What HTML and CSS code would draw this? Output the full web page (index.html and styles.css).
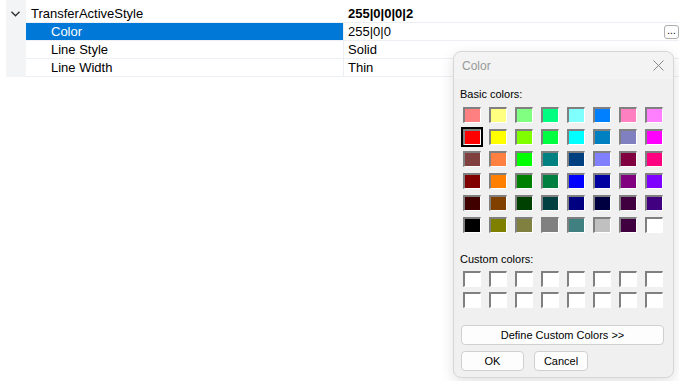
FILE: index.html
```html
<!DOCTYPE html>
<html lang="en">
<head>
    <meta charset="UTF-8">
    <title>Property Grid - Color</title>
    <link rel="stylesheet" href="styles.css">
</head>
<body>
    <div class="grid">
        <div class="gutter">
            <svg class="chevron" width="9" height="6" viewBox="0 0 9 6">
                <path d="M0.5 0.8 L4.5 4.8 L8.5 0.8" fill="none" stroke="#333" stroke-width="1.4"/>
            </svg>
        </div>
        <div class="rows">
            <div class="row category">
                <div class="name">TransferActiveStyle</div>
                <div class="value bold">255|0|0|0|2</div>
            </div>
            <div class="row selected">
                <div class="name sub">Color</div>
                <div class="value">255|0|0<span class="dots">...</span></div>
            </div>
            <div class="row">
                <div class="name sub">Line Style</div>
                <div class="value">Solid</div>
            </div>
            <div class="row">
                <div class="name sub">Line Width</div>
                <div class="value">Thin</div>
            </div>
        </div>
    </div>

    <div class="dialog">
        <div class="titlebar">
            <span class="title">Color</span>
            <svg class="close" width="11" height="11" viewBox="0 0 11 11">
                <path d="M0.5 0.5 L10.5 10.5 M10.5 0.5 L0.5 10.5" stroke="#888" stroke-width="1"/>
            </svg>
        </div>
        <div class="dlg-body">
            <div class="label">Basic colors:</div>
            <div class="swatches" id="basic"></div>
            <div class="label custom-label">Custom colors:</div>
            <div class="swatches custom" id="custom"></div>
            <button class="btn wide">Define Custom Colors &gt;&gt;</button>
            <div class="btn-row">
                <button class="btn ok">OK</button>
                <button class="btn cancel">Cancel</button>
            </div>
        </div>
    </div>

    <script>
        const basic = [
            "#ff8080", "#ffff80", "#80ff80", "#00ff80", "#80ffff", "#0080ff", "#ff80c0", "#ff80ff",
            "#ff0000", "#ffff00", "#80ff00", "#00ff40", "#00ffff", "#0080c0", "#8080c0", "#ff00ff",
            "#804040", "#ff8040", "#00ff00", "#008080", "#004080", "#8080ff", "#800040", "#ff0080",
            "#800000", "#ff8000", "#008000", "#008040", "#0000ff", "#0000a0", "#800080", "#8000ff",
            "#400000", "#804000", "#004000", "#004040", "#000080", "#000040", "#400040", "#400080",
            "#000000", "#808000", "#808040", "#808080", "#408080", "#c0c0c0", "#400040", "#ffffff"
        ];

        let basicBox = document.getElementById("basic");
        basic.forEach(function (c, i) {
            let s = document.createElement("div");
            s.className = "swatch" + (i === 8 ? " current" : "");
            s.style.backgroundColor = c;
            basicBox.appendChild(s);
        });

        let customBox = document.getElementById("custom");
        for (let i = 0; i < 16; i++) {
            let s = document.createElement("div");
            s.className = "swatch";
            customBox.appendChild(s);
        }
    </script>
</body>
</html>
```

FILE: styles.css
```css
body {
    margin: 0;
    background-color: #fff;
    font-family: 'Liberation Sans', Arial, sans-serif;
    color: #000;
}

/* property grid */
.grid {
    display: flex;
    margin-left: 6px;
    height: 77px;
}

.gutter {
    width: 20px;
    background-color: #f3f4f6;
    padding-top: 11px;
    box-sizing: border-box;
}

.chevron {
    display: block;
    margin-left: 5px;
}

.rows {
    flex: 1;
    padding-top: 5px;
}

.row {
    display: flex;
    height: 17px;
    border-bottom: 1px solid #eceff3;
    font-size: 13px;
    line-height: 17px;
}

.name {
    width: 312px;
    padding-left: 5px;
    border-right: 1px solid #eceff3;
}

.name.sub {
    padding-left: 25px;
    width: 292px;
}

.value {
    flex: 1;
    display: flex;
    padding-left: 4px;
}

.bold {
    font-weight: bold;
}

.row.category .name {
    border-right-color: transparent;
}

.row.selected .name {
    background-color: #0078d7;
    color: #fff;
}

.dots {
    margin-left: auto;
    margin-right: 0;
    margin-top: 2px;
    width: 13px;
    height: 12px;
    border: 1px solid #adadad;
    border-radius: 3px;
    background-color: #fdfdfd;
    font-size: 10px;
    line-height: 9px;
    text-align: center;
}

/* colour dialog */
.dialog {
    position: absolute;
    left: 453px;
    top: 51px;
    width: 221px;
    height: 327px;
    box-sizing: border-box;
    background-color: #f0f0f0;
    border: 1px solid #d6d6d6;
    border-radius: 8px;
    box-shadow: 0 4px 14px rgba(0, 0, 0, 0.12);
    font-size: 11px;
}

.titlebar {
    display: flex;
    align-items: center;
    height: 27px;
    padding: 0 8px;
    background-color: #f3f3f3;
    border-radius: 8px 8px 0 0;
}

.title {
    font-size: 12px;
    color: #999;
}

.close {
    margin-left: auto;
    margin-right: 1px;
}

.dlg-body {
    padding: 8px 6px 0 6px;
}

.label {
    height: 14px;
    line-height: 14px;
    padding-bottom: 5px;
}

.swatches {
    display: grid;
    grid-template-columns: repeat(8, 18px);
    grid-auto-rows: 16px;
    column-gap: 8px;
    row-gap: 6px;
    margin-left: 3px;
    margin-top: 1px;
}

.swatch {
    box-sizing: border-box;
    border-style: solid;
    border-width: 2px 1px 1px 2px;
    border-color: #808080 #fff #fff #808080;
    background-color: #fff;
}

.swatch.current {
    outline: 2px solid #000;
}

.custom-label {
    margin-top: 19px;
}

.swatches.custom {
    row-gap: 5px;
    margin-top: 0;
}

.btn {
    display: block;
    height: 20px;
    box-sizing: border-box;
    border: 1px solid #d0d0d0;
    border-radius: 4px;
    background-color: #fdfdfd;
    font-family: 'Liberation Sans', Arial, sans-serif;
    font-size: 11px;
    color: #000;
    padding: 0;
}

.wide {
    width: 203px;
    margin-top: 17px;
    margin-left: 1px;
}

.btn-row {
    display: flex;
    gap: 10px;
    margin-top: 6px;
    margin-left: 1px;
}

.ok {
    width: 63px;
}

.cancel {
    width: 54px;
}
```
